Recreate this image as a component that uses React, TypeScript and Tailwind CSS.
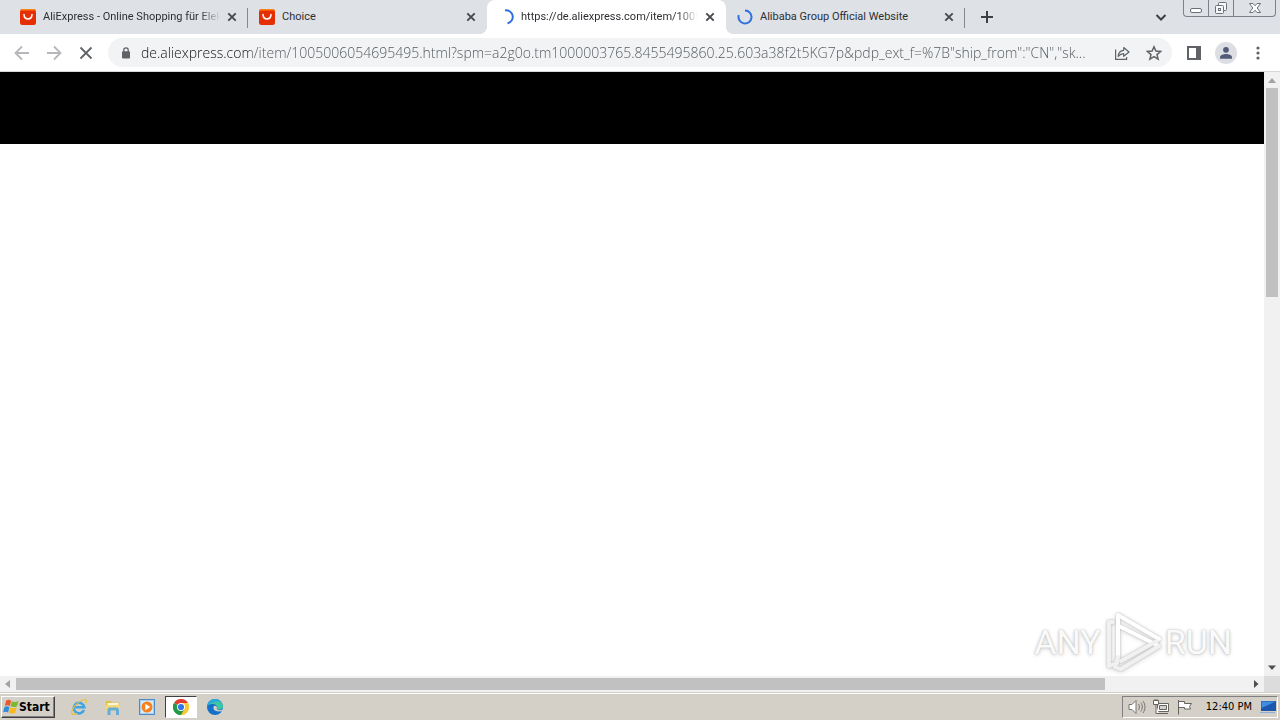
import React from "react";

function AliIcon() {
  return (
    <svg viewBox="0 0 16 16" className="size-4 shrink-0" aria-hidden="true">
      <rect width="16" height="16" rx="2.5" fill="#e62e04" />
      <path d="M0 3V2.500A2.500 2.500 0 0 1 2.500 0h11A2.500 2.500 0 0 1 16 2.500V3c-.5-1-1.200-1.500-2.500-1.500h-11C1.200 1.500 .5 2 0 3z" fill="#fb8316" />
      <path d="M4 5.600c.3 5.700 7.700 5.700 8 0" fill="none" stroke="#fff" strokeWidth="1.500" strokeLinecap="round" />
    </svg>
  );
}

function Spinner({ path }: { path: string }) {
  return (
    <svg viewBox="0 0 16 16" className="size-4 shrink-0" aria-hidden="true">
      <path d={path} fill="none" stroke="#2f6fe0" strokeWidth="2" />
    </svg>
  );
}

function CloseIcon() {
  return (
    <svg viewBox="0 0 10 10" className="size-[10px]" aria-hidden="true">
      <path d="M1.300 1.300l7.400 7.400M8.700 1.300l-7.400 7.400" stroke="#45484d" strokeWidth="1.900" />
    </svg>
  );
}

type TabProps = { title: string; icon: React.ReactNode; active?: boolean; divider?: boolean; fade?: boolean };

function Tab({ title, icon, active, divider, fade }: TabProps) {
  return (
    <div className={"relative flex h-[34px] w-[239px] min-w-0 shrink items-center pr-2 pl-[11px] " + (active ? "rounded-t-lg bg-white" : "")}>
      {active && (
        <>
          <span className="absolute bottom-0 -left-2 size-2 bg-[radial-gradient(circle_at_0_0,transparent_8px,#fff_8px)]" />
          <span className="absolute -right-2 bottom-0 size-2 bg-[radial-gradient(circle_at_100%_0,transparent_8px,#fff_8px)]" />
        </>
      )}
      <button className="flex min-w-0 flex-1 items-center gap-[7px] text-left">
        {icon}
        <span
          className={
            "flex-1 overflow-hidden font-['Roboto',sans-serif] text-[11px] leading-4 whitespace-nowrap text-[#2c2f33] " +
            (fade ? "[mask-image:linear-gradient(90deg,#000_calc(100%-20px),transparent)]" : "")
          }
        >
          {title}
        </span>
      </button>
      <button aria-label={"Close " + title} className="ml-1 flex size-4 items-center justify-center">
        <CloseIcon />
      </button>
      {divider && <span className="absolute top-2 right-0 h-5 w-px bg-[#85888d]" />}
    </div>
  );
}

function Titlebar() {
  return (
    <header className="flex h-[34px] shrink-0 items-start bg-[#dee1e6] pl-[9px]">
      <Tab title="AliExpress - Online Shopping für Elek" icon={<AliIcon />} divider fade />
      <Tab title="Choice" icon={<AliIcon />} />
      <Tab title="https://de.aliexpress.com/item/1005" icon={<Spinner path="M7 1.500a6.500 6.500 0 0 1 2.500 12.800" />} active fade />
      <Tab title="Alibaba Group Official Website" icon={<Spinner path="M8 1.500a6.500 6.500 0 1 1-6.200 4.600" />} divider />
      <button aria-label="New tab" className="ml-[10px] flex h-[34px] w-6 items-center justify-center">
        <svg viewBox="0 0 12 12" className="size-3" aria-hidden="true">
          <path d="M6 0v12M0 6h12" stroke="#3c4043" strokeWidth="2" />
        </svg>
      </button>
      <div className="flex-1" />
      <button aria-label="Search tabs" className="mr-[10px] flex h-[34px] w-6 items-center justify-center">
        <svg viewBox="0 0 12 12" className="size-3" aria-hidden="true">
          <path d="M1.500 4l4.500 4.500L10.500 4" fill="none" stroke="#3c4043" strokeWidth="2" />
        </svg>
      </button>
      <div className="mr-1 flex h-[17px] rounded-b border border-t-0 border-[#7d828a] text-[#6c7178]">
        <button aria-label="Minimize" className="flex w-[25px] items-center justify-center border-r border-[#7d828a]">
          <svg viewBox="0 0 14 14" className="size-[14px]">
            <rect x="1.500" y="7.500" width="11" height="4" rx="1.500" fill="#fff" stroke="currentColor" />
          </svg>
        </button>
        <button aria-label="Restore" className="flex w-[25px] items-center justify-center border-r border-[#7d828a]">
          <svg viewBox="0 0 14 14" className="size-[14px]" fill="#f6f7f8" stroke="currentColor">
            <rect x="4.500" y="1.500" width="8" height="8" rx="1" />
            <rect x="1.500" y="4.500" width="8" height="8" rx="1" />
            <rect x="4.500" y="7.500" width="2" height="2" />
          </svg>
        </button>
        <button aria-label="Close" className="flex w-[41px] items-center justify-center">
          <svg viewBox="0 0 14 14" className="size-[14px]" fill="#fff" stroke="currentColor">
            <path d="M1.500 2.500h3.500l2 2.300 2-2.300h3.500L9.200 7l3.300 4.500H9L7 9.200l-2 2.300H1.500L4.800 7z" />
          </svg>
        </button>
      </div>
    </header>
  );
}

const URL_TEXT =
  'de.aliexpress.com/item/1005006054695495.html?spm=a2g0o.tm1000003765.8455495860.25.603a38f2t5KG7p&pdp_ext_f=%7B"ship_from":"CN","sk...';

function Toolbar() {
  return (
    <div className="flex h-[38px] shrink-0 items-center border-b border-[#d5d7da] bg-white pl-3">
      <button aria-label="Back" className="flex size-5 items-center justify-center">
        <svg viewBox="0 0 16 16" className="size-4" fill="none" stroke="#b5b7ba" strokeWidth="1.800">
          <path d="M15 8H2M8 1.500L1.500 8 8 14.500" />
        </svg>
      </button>
      <button aria-label="Forward" className="ml-3 flex size-5 items-center justify-center">
        <svg viewBox="0 0 16 16" className="size-4" fill="none" stroke="#b5b7ba" strokeWidth="1.800">
          <path d="M1 8h13M8 1.500L14.500 8 8 14.500" />
        </svg>
      </button>
      <button aria-label="Stop loading" className="ml-3 flex size-5 items-center justify-center">
        <svg viewBox="0 0 14 14" className="size-[14px]" stroke="#5f6368" strokeWidth="1.800">
          <path d="M1.500 1.500l11 11M12.500 1.500l-11 11" />
        </svg>
      </button>
      <div className="ml-3 flex h-[29px] min-w-0 flex-1 items-center rounded-full bg-[#f1f3f4] pr-2 pl-[13px]">
        <svg viewBox="0 0 10 12" className="h-3 w-[10px] shrink-0" aria-hidden="true">
          <path d="M2.800 5V3a2.200 2.200 0 0 1 4.400 0v2" fill="none" stroke="#5f6368" strokeWidth="1.300" />
          <rect x="1" y="4.300" width="8" height="7.200" rx="1" fill="#5f6368" />
        </svg>
        <input
          aria-label="Address"
          readOnly
          value={URL_TEXT}
          className="ml-[10px] min-w-0 flex-1 bg-[linear-gradient(90deg,#111215_109px,#505459_109px)] bg-clip-text font-['Open_Sans',sans-serif] text-[14px] leading-5 font-light text-transparent outline-none"
        />
        <button aria-label="Share" className="ml-3 flex size-5 items-center justify-center">
          <svg viewBox="0 0 16 16" className="size-4" fill="none" stroke="#5f6368" strokeWidth="1.200">
            <path d="M1.600 4.500v9.900h11v-2.500" />
            <path d="M4.200 11.500c.3-4 2.400-6 5.500-6.200V2.500L15 7l-5.300 4.300V8.700c-2.200 0-4 .9-5.500 2.800z" strokeLinejoin="round" />
          </svg>
        </button>
        <button aria-label="Bookmark" className="ml-3 flex size-5 items-center justify-center">
          <svg viewBox="0 0 16 16" className="size-4" fill="none" stroke="#5f6368" strokeWidth="1.500">
            <path d="M8 1.800l1.900 4.300 4.700.4-3.600 3.100 1.100 4.600L8 11.700l-4.100 2.500L5 9.600 1.400 6.500l4.700-.4z" />
          </svg>
        </button>
      </div>
      <button aria-label="Side panel" className="ml-3 flex size-5 items-center justify-center">
        <svg viewBox="0 0 14 14" className="size-[14px]">
          <rect x="1" y="1" width="12" height="12" fill="none" stroke="#5f6368" strokeWidth="2" />
          <path d="M9 1h4v12H9z" fill="#5f6368" />
        </svg>
      </button>
      <button aria-label="Profile" className="mx-[11px] flex size-[22px] items-center justify-center">
        <svg viewBox="0 0 22 22" className="size-[22px]">
          <circle cx="11" cy="11" r="11" fill="#dcdee3" />
          <circle cx="11" cy="7.800" r="2.900" fill="#535b78" />
          <path d="M5 16.800v-1.600c0-2 3.600-3.200 6-3.200s6 1.200 6 3.200v1.600z" fill="#535b78" />
        </svg>
      </button>
      <button aria-label="Menu" className="mr-3 flex size-5 items-center justify-center">
        <svg viewBox="0 0 4 14" className="h-[14px] w-1" fill="#5f6368">
          <circle cx="2" cy="2" r="1.600" />
          <circle cx="2" cy="7" r="1.600" />
          <circle cx="2" cy="12" r="1.600" />
        </svg>
      </button>
    </div>
  );
}

function Arrow({ d, color }: { d: string; color: string }) {
  return (
    <svg viewBox="0 0 16 16" className="size-4 shrink-0" aria-hidden="true">
      <path d={d} fill={color} />
    </svg>
  );
}

const WORD =
  "font-['Roboto',sans-serif] text-[34px] leading-none font-normal text-[#fafafa] [text-shadow:0_0_2px_#b8b8b8,0_1px_4px_#ccc]";

function Watermark() {
  return (
    <div className="absolute right-8 bottom-[2px] flex items-center">
      <span className={WORD}>ANY</span>
      <svg viewBox="0 0 64 64" className="size-16 [filter:drop-shadow(0_0_1px_#bbb)_drop-shadow(0_1px_2px_#ddd)]" fill="none" strokeLinejoin="round" strokeLinecap="round">
        <g stroke="#fff" strokeWidth="4">
          <path d="M17 47V5l41 24" />
          <path d="M18 16l38 19" />
        </g>
        <g stroke="#f1f1f1" strokeWidth="4">
          <path d="M12 12H8v44l8-3" />
          <path d="M20 51l36-20M20 59l38-23M17 47l-3 10 5 2" />
        </g>
      </svg>
      <span className={WORD}>RUN</span>
    </div>
  );
}

function Viewport() {
  return (
    <main className="grid min-h-0 flex-1 grid-cols-[1fr_16px] grid-rows-[1fr_16px]">
      <div className="relative overflow-hidden bg-white">
        <div className="h-[72px] bg-black" />
        <Watermark />
      </div>
      <div className="flex flex-col items-center bg-[#f1f1f1]">
        <Arrow d="M8 6l4 5H4z" color="#a3a3a3" />
        <div className="w-full flex-1">
          <div className="mx-auto h-[36.5%] w-3 bg-[#c1c1c1]" />
        </div>
        <Arrow d="M8 10l4-4.500H4z" color="#505050" />
      </div>
      <div className="flex items-center bg-[#f1f1f1]">
        <Arrow d="M5 8l5-4v8z" color="#a3a3a3" />
        <div className="flex-1">
          <div className="h-3 w-[88.4%] bg-[#c1c1c1]" />
        </div>
        <Arrow d="M10.500 8L6 4v8z" color="#505050" />
      </div>
      <div className="bg-[#dcdcdc]" />
    </main>
  );
}

function WindowsFlag() {
  return (
    <svg viewBox="0 0 16 16" className="size-4" aria-hidden="true">
      <path d="M3.200 1.500c2-1.200 3.500-.9 5 .2L6.800 7c-1.600-1-3.200-1-5-.2z" fill="#e8592b" />
      <path d="M8.900 2.200c1.700 1 3.800 1 6.600-.3l-1.500 5.300c-2.400 1.200-4.500 1-6.500.1z" fill="#7db92f" />
      <path d="M1.500 7.900c1.800-.9 3.400-.9 5 .2l-1.400 5.500c-1.500-1.100-3.200-1.100-5-.3z" fill="#2f8bd8" />
      <path d="M7.300 8.400c2 1 4.100 1 6.400 0l-1.500 5.300c-2.400 1.200-4.500 1.100-6.400.1z" fill="#f9b91e" />
    </svg>
  );
}

function IeIcon() {
  return (
    <svg viewBox="0 0 18 18" className="size-[18px]" aria-hidden="true">
      <path d="M14 12A5.300 5.300 0 1 1 14.300 9.300H5" fill="none" stroke="#41a5e4" strokeWidth="2.600" />
      <path d="M2.500 16.300C-.5 13.500 7.500 2.300 15 1.500c2 .1 1.700 2.200.9 3.600M2.500 16.300c1.300.7 3-.2 4.300-1" fill="none" stroke="#e9bd3c" strokeWidth="1.200" />
    </svg>
  );
}

function FolderIcon() {
  return (
    <svg viewBox="0 0 18 18" className="size-[18px]" aria-hidden="true">
      <path d="M2 3h5l1 1.500h7.500V13H2z" fill="#e0c050" />
      <path d="M3.500 5h11v4h-11z" fill="#fdf7d8" />
      <path d="M2 7h14v6H2z" fill="#f0d878" />
      <path d="M3.500 17v-5c0-1.500 1-2.500 2.500-2.500h6.500c1.500 0 2.500 1 2.500 2.500v5h-3v-4.500H6.500V17z" fill="#62addb" />
    </svg>
  );
}

function MediaIcon() {
  return (
    <svg viewBox="0 0 16 16" className="size-4" aria-hidden="true">
      <rect x=".5" y=".5" width="15" height="15" fill="#a9cff0" stroke="#4d8bc8" />
      <path d="M2 2h12v12H2z" fill="#d8e9f7" />
      <circle cx="8" cy="8" r="5.500" fill="#f58220" />
      <path d="M6.300 4.800l5 3.200-5 3.200z" fill="#fff" />
    </svg>
  );
}

function ChromeIcon() {
  return (
    <svg viewBox="0 0 16 16" className="size-4" aria-hidden="true">
      <path d="M8 8L1.070 4A8 8 0 0 1 14.930 4z" fill="#e33b2e" />
      <path d="M8 8l6.930-4A8 8 0 0 1 8 16z" fill="#fcc934" />
      <path d="M8 8v8A8 8 0 0 1 1.070 4z" fill="#279847" />
      <path d="M8 4h6.930A8 8 0 0 1 8 16l3.460-6z" fill="#fcc934" />
      <path d="M4.540 10L1.070 4A8 8 0 0 0 8 16l3.460-6z" fill="#279847" />
      <circle cx="8" cy="8" r="4" fill="#fff" />
      <circle cx="8" cy="8" r="3.100" fill="#3476e5" />
    </svg>
  );
}

function EdgeIcon() {
  return (
    <svg viewBox="0 0 16 16" className="size-4" aria-hidden="true">
      <circle cx="8" cy="8" r="8" fill="#1470c8" />
      <path d="M.2 7A8 8 0 0 1 16 7.500c0 2.500-2.500 3.500-5.500 3-1.500-.3-1-1-.6-2C10.500 5 4 3.500.2 7z" fill="#3cc6a3" />
      <path d="M.2 7A8 8 0 0 1 8 0c3 0 5 1.200 6.200 3C10 1.500 4 3 .2 7z" fill="#2aa9dc" />
      <path d="M16 11.400c-3 1.800-8.500 1.200-9.500-1.600-.3-1.300.2-2.300 1-3 1.500-.2 2.700.9 2.400 2-1.400 2.200 2.600 3.300 6.100 1.500z" fill="#d4d0c8" />
    </svg>
  );
}

const quick = [
  { label: "Internet Explorer", icon: <IeIcon /> },
  { label: "Windows Explorer", icon: <FolderIcon /> },
  { label: "Media Player", icon: <MediaIcon /> },
  { label: "Google Chrome", icon: <ChromeIcon />, pressed: true },
  { label: "Microsoft Edge", icon: <EdgeIcon /> },
];

function Taskbar() {
  return (
    <footer className="flex h-7 shrink-0 items-center bg-[#d4d0c8] px-px pt-[2px] shadow-[inset_0_1px_0_#d4d0c8,inset_0_2px_0_#fff]">
      <button className="flex h-[22px] w-[54px] items-center border border-t-white border-r-[#404040] border-b-[#404040] border-l-white pl-px font-['DejaVu_Sans_Condensed',sans-serif] text-[12px] leading-4 font-bold text-black shadow-[inset_-1px_-1px_0_#808080]">
        <WindowsFlag />
        Start
      </button>
      <nav className="ml-2 flex items-center gap-[2px]">
        {quick.map((q) => (
          <button
            key={q.label}
            aria-label={q.label}
            className={
              "flex h-[22px] w-8 items-center justify-center border " +
              (q.pressed ? "border-t-[#404040] border-r-white border-b-white border-l-[#404040] bg-white" : "border-transparent")
            }
          >
            {q.icon}
          </button>
        ))}
      </nav>
      <div className="flex-1" />
      <div className="mr-px flex h-[22px] items-center border border-t-[#808080] border-r-white border-b-white border-l-[#808080] pr-px pl-[5px]">
        <svg viewBox="0 0 18 16" className="h-4 w-[18px]" fill="#fff" stroke="#77756f">
          <path d="M1 5.500h3l4-4v13l-4-4H1z" />
          <path d="M10.500 5c1.200 2 1.200 4 0 6M12.800 3.500c2 3 2 6 0 9M15 2c2.600 4 2.600 8 0 12" fill="none" />
        </svg>
        <svg viewBox="0 0 16 16" className="ml-[7px] size-4" fill="#fff" stroke="#66645f">
          <path d="M4.500 4.500h11v8h-11zM6 14.500h9" />
          <path d="M6.500 6.500h7v4h-7z" fill="#d4d0c8" />
          <path d="M.5 1.500h5v4h-5zM2 0v2M4 0v2M3 5.500v9h3" />
        </svg>
        <svg viewBox="0 0 16 16" className="ml-2 size-4" fill="#fff" stroke="#66645f">
          <path d="M1.500 1v14.500M1.500 2.500h6v2h7l-2 3 1 2.500h-6V8.500h-6z" />
        </svg>
        <time className="ml-[13px] font-['DejaVu_Sans_Condensed',sans-serif] text-[11px] leading-4 whitespace-nowrap text-black">12:40 PM</time>
        <button aria-label="Show desktop" className="ml-2 flex">
          <svg viewBox="0 0 16 16" className="size-4">
            <path d="M1 2h15v10H1z" fill="#1d56ad" />
            <path d="M1.500 2.500h14L1.500 9z" fill="#3f8ee2" />
            <path d="M0 13h15v1H0z" fill="#8eaedb" />
          </svg>
        </button>
      </div>
    </footer>
  );
}

export default function App() {
  return (
    <div className="flex h-screen flex-col overflow-hidden bg-white font-['DejaVu_Sans_Condensed',sans-serif]">
      <Titlebar />
      <Toolbar />
      <Viewport />
      <Taskbar />
    </div>
  );
}
